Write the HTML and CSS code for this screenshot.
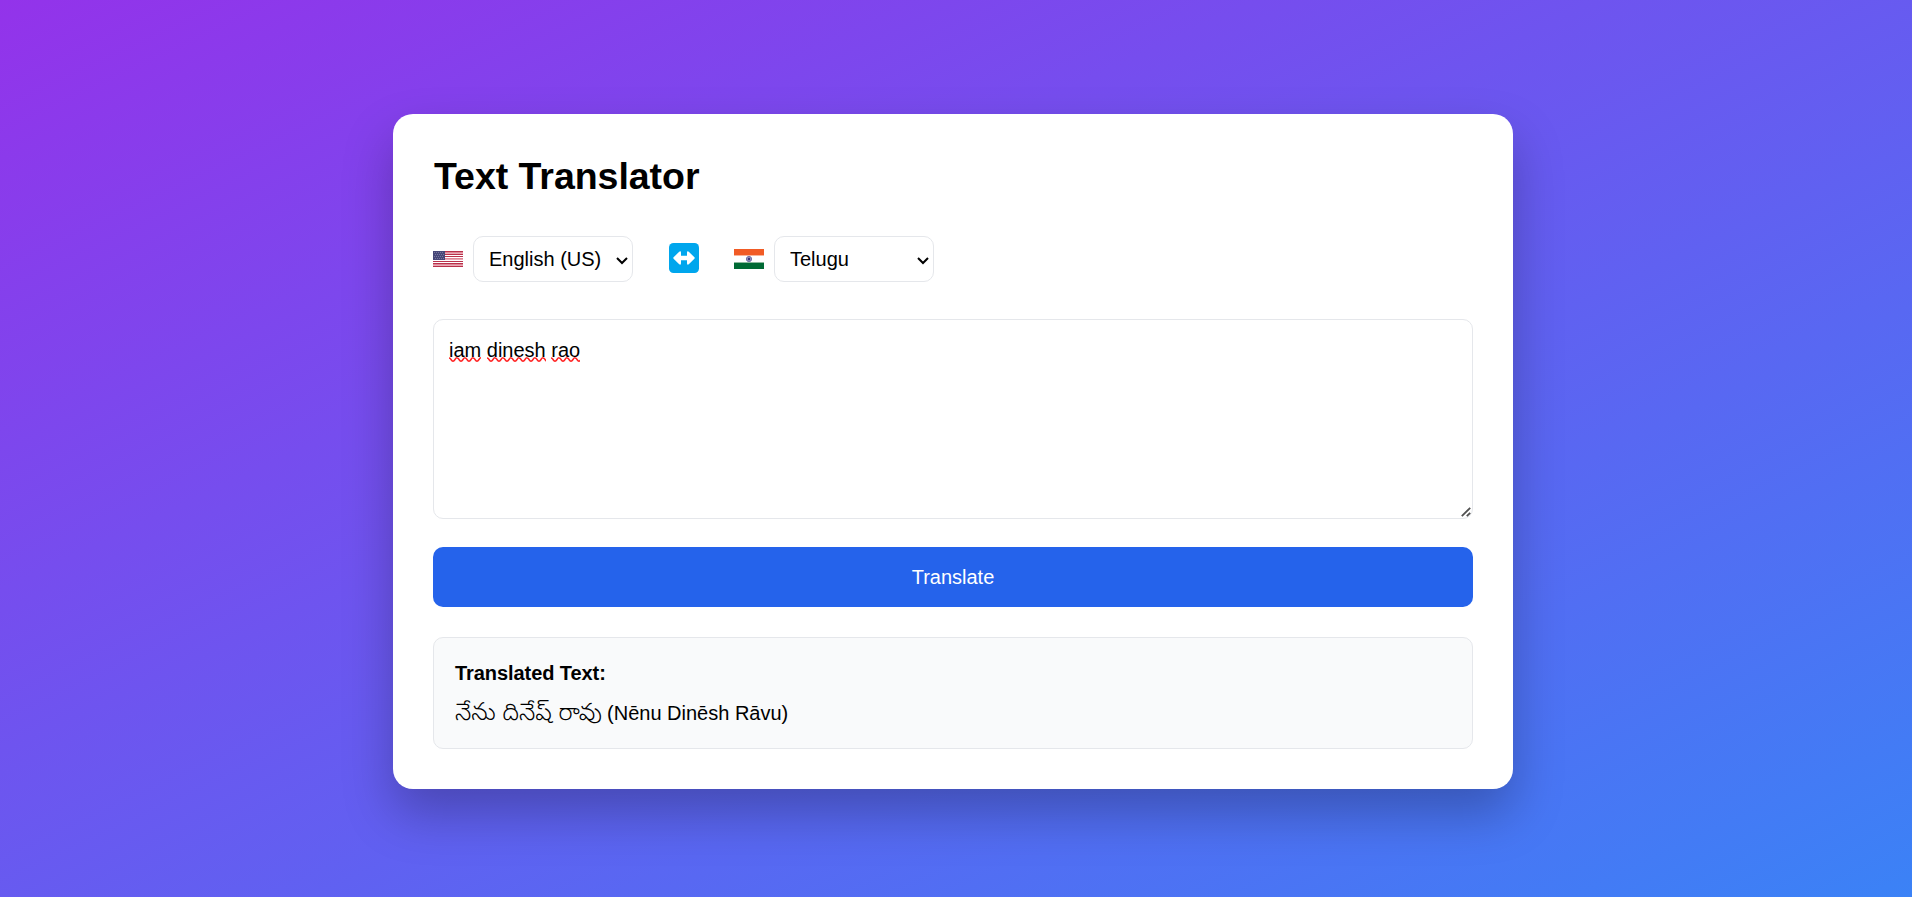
FILE: index.html
```html
<!DOCTYPE html>
<html lang="en">
<head>
<meta charset="utf-8">
<title>Text Translator</title>
<link rel="stylesheet" href="styles.css">
</head>
<body>
<main class="card">
  <h1 class="title">Text Translator</h1>
  <div class="languages">
    <div class="language">
      <svg class="flag-us" viewBox="0 0 30 16" shape-rendering="crispEdges">
        <path fill="#fff" d="M0 0h30v16H0z"/>
        <path fill="#b9314b" d="M0 0h30v1H0zM12 3h18v1H12zM12 5h18v1H12zM0 10h30v1H0zM0 12h30v1H0zM0 15h30v1H0z"/>
        <path fill="#df8797" d="M12 1h18v1H12zM12 7h18v1H12zM0 13h30v1H0z"/>
        <path fill="#e8a9b4" d="M12 2h18v1H12zM12 8h18v1H12zM0 14h30v1H0z"/>
        <path fill="#464778" d="M0 0h12v9H0z"/>
        <path stroke="#77779d" stroke-dasharray="1 1" d="M1 1.5h10M2 3.5h9M1 5.5h10M2 7.5h9"/>
      </svg>
      <select class="select"><option>English (US)</option></select>
    </div>
    <svg class="swap" viewBox="0 0 30 30">
      <rect width="30" height="30" rx="4.5" fill="#00a6ed"/>
      <path d="M4.6 14.3 10.2 8.7q1.8-1.2 1.8 1v3h6v-3q0-2.2 1.8-1L25.4 14.3q.7.7 0 1.4L19.8 21.3q-1.8 1.2-1.8-1v-3h-6v3q0 2.2-1.8 1L4.6 15.7q-.7-.7 0-1.4Z" fill="#fff"/>
    </svg>
    <div class="language">
      <svg class="flag-in" viewBox="0 0 30 20">
        <path fill="#fff" d="M0 0h30v20H0z"/>
        <path fill="#f15b25" d="M0 0h30v6H0z"/>
        <path fill="#f9b59b" d="M0 6h30v1H0z"/>
        <path fill="#8bb99e" d="M0 13h30v1H0z"/>
        <path fill="#006a35" d="M0 14h30v6H0z"/>
        <circle cx="15" cy="10" r="2.6" fill="#9896c2" stroke="#716ea7"/>
        <circle cx="15" cy="10" r="1.2" fill="#373378"/>
      </svg>
      <select class="select"><option>Telugu</option></select>
    </div>
  </div>
  <div class="input-wrap">
    <div class="input" contenteditable="true" spellcheck="false"><span class="misspelt">iam</span> <span class="misspelt">dinesh</span> <span class="misspelt">rao</span></div>
    <svg class="grip" viewBox="0 0 10 10"><path d="M.8 9.2 9.2.8M5.8 9.2 9.2 5.8" stroke="#505050" stroke-width="1.8"/></svg>
  </div>
  <button class="translate">Translate</button>
  <section class="result">
    <strong>Translated Text:</strong>
    <p class="output"><span class="telugu" lang="te">నేను దినేష్ రావు</span> (Nēnu Dinēsh Rāvu)</p>
  </section>
</main>
</body>
</html>
```
FILE: styles.css
```css
* { box-sizing: border-box; }
body {
  margin: 0;
  height: 100vh;
  display: flex;
  justify-content: center;
  align-items: flex-start;
  padding: 114px 6px 0 0;
  overflow: hidden;
  background: linear-gradient(to bottom right, #9333ea, #3b82f6);
  font-family: "Liberation Sans", Arial, sans-serif;
  font-size: 20px;
  color: #000;
}
.card {
  width: 1120px;
  height: 675px;
  padding: 40px;
  border-radius: 20px;
  background: #fff;
  box-shadow: 0 25px 50px rgba(0, 0, 0, .25);
}
.title {
  margin: 0 0 37px;
  padding-left: 1px;
  font-size: 37.5px;
  letter-spacing: -.04px;
  line-height: 45px;
}
.languages { display: flex; align-items: center; height: 46px; }
.language { display: flex; align-items: center; gap: 10px; }
.flag-us { width: 30px; height: 16px; }
.flag-in { width: 30px; height: 20px; }
.select {
  width: 160px;
  height: 46px;
  padding: 10px 7px 10px 15px;
  border: 1px solid #e5e7eb;
  border-radius: 10px;
  background: no-repeat 142px 19px / 12px 9px #fff url("data:image/svg+xml,%3Csvg xmlns='http://www.w3.org/2000/svg' viewBox='0 0 12 9'%3E%3Cpath d='M1 2 6 7 11 2' fill='none' stroke='%23000' stroke-width='2'/%3E%3C/svg%3E");
  appearance: none;
  color: #000;
  font: inherit;
}
.swap { width: 30px; height: 30px; margin: -2px 35px 0 36px; }
.input-wrap { position: relative; margin: 37px 0 28px; }
.input {
  height: 200px;
  padding: 19px 15px;
  border: 1px solid #e5e7eb;
  border-radius: 10px;
  line-height: 23px;
  overflow: auto;
}
.grip { position: absolute; right: 2px; bottom: 2px; width: 10px; height: 10px; }
.misspelt {
  background: repeat-x 0 100% / 8px 5px url("data:image/svg+xml,%3Csvg xmlns='http://www.w3.org/2000/svg' viewBox='0 0 8 5'%3E%3Cpath d='M-2 3.8Q0-.8 2 2.5T6 2.5T10 2.5' fill='none' stroke='%23f22' stroke-width='1.5'/%3E%3C/svg%3E");
  padding-bottom: 1px;
}
.translate {
  display: block;
  width: 100%;
  height: 60px;
  padding: 0;
  border: 0;
  border-radius: 10px;
  background: #2563eb;
  color: #fff;
  font: inherit;
}
.result {
  height: 112px;
  margin-top: 30px;
  padding: 24px 21px;
  border: 1px solid #e5e7eb;
  border-radius: 10px;
  background: #f9fafb;
  line-height: 23px;
}
.result strong { letter-spacing: -.07px; }
.output { margin: 17px 0 0; white-space: nowrap; }
.telugu { display: inline-block; width: 146.5px; font-family: "Nirmala UI", "Noto Sans Telugu", sans-serif; font-size: 24px; font-weight: 300; }
```
